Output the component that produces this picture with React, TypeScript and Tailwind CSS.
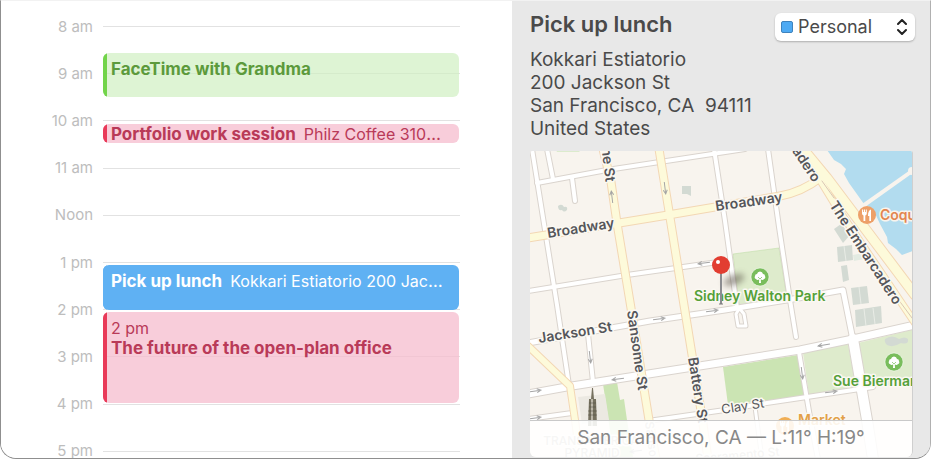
import React from "react";

const hours = ["8 am", "9 am", "10 am", "11 am", "Noon", "1 pm", "2 pm", "3 pm", "4 pm", "5 pm"];

type CalendarEvent = {
  title: string;
  time?: string;
  place?: string;
  box: string;
  bar: string;
};

const events: CalendarEvent[] = [
  {
    title: "FaceTime with Grandma",
    box: "top-[52px] h-11 bg-[#d0f0c2]/70 pt-1.5 text-[#5c9a3c]",
    bar: "bg-[#72d44a]",
  },
  {
    title: "Portfolio work session",
    place: "Philz Coffee 3101 24th St",
    box: "top-[123px] h-[19px] bg-[#f8cdda] text-[#b93a58]",
    bar: "bg-[#e93a59]",
  },
  {
    title: "Pick up lunch",
    place: "Kokkari Estiatorio 200 Jackson St",
    box: "top-[264px] h-[45px] bg-[#5fb1f3] pt-1.5 text-white",
    bar: "bg-[#5fb1f3]",
  },
  {
    title: "The future of the open-plan office",
    time: "2 pm",
    box: "top-[311px] h-[91px] bg-[#f5bccd]/75 pt-1.5 text-[#b93a58]",
    bar: "bg-[#e93a59]",
  },
];

function Timeline() {
  return (
    <section aria-label="Day" className="relative overflow-hidden bg-white">
      <ol className="grid h-[474px] auto-rows-fr pt-0.5">
        {hours.map((hour) => (
          <li key={hour} className="flex items-center gap-2.5 pr-[52px]">
            <span className="w-[92px] text-right text-[15px] leading-5 text-[#bdbdbd]">{hour}</span>
            <span className="h-px flex-1 bg-[#e2e2e2]" />
          </li>
        ))}
      </ol>
      {events.map((event) => (
        <button
          key={event.title}
          type="button"
          className={`absolute right-[53px] left-[102px] flex items-start overflow-hidden rounded-md pl-2 text-left text-[17px] leading-5 ${event.box}`}
        >
          <span className={`absolute inset-y-0 left-0 w-1 ${event.bar}`} />
          <span className="min-w-0 truncate pr-3.5">
            {event.time && <span className="block text-[16px]">{event.time}</span>}
            <span className="font-bold">{event.title}</span>
            {event.place && <span className="ml-2 text-[16px]">{event.place}</span>}
          </span>
        </button>
      ))}
    </section>
  );
}

const whiteRoads: [string, number][] = [
  ["M2 -2 L27 154 L39 234", 4],
  ["M7 32 L77 19 L215 -2", 4],
  ["M17 -2 L23 28", 4],
  ["M42 27 L45 50", 4],
  ["M-2 140 L97 124 L195 110", 4],
  ["M184 -2 L195 70 L207 157", 4],
  ["M238 -2 L249 76 L260 149 L266 186", 4],
  ["M-2 192 L120 170 L195 159 L263 148 L313 139 L323 189", 5],
  ["M209 158 L206 163 L208 175 H216 L214 163 L210 158", 3],
  ["M58 183 L63 231", 4],
  ["M-2 268 L42 262", 4],
  ["M118 270 L195 259 L230 253 L277 246 L343 236", 4],
  ["M269 201 L280 266 L288 308", 4],
  ["M225 256 L232 308", 3],
  ["M-2 243 L42 235 L195 211 L270 199 L323 188 L385 174", 7],
  ["M323 188 L337 269 L343 308", 10],
];

const yellowRoads: [string, number][] = [
  ["M-2 87 L138 64 L250 45 Q272 41 290 27", 7],
  ["M73 -2 L81 31 L87 72 L100 151 L119 269 L126 308", 7],
  ["M129 -2 L154 154 L172 266 L178 308", 7],
  ["M-2 195 L40 235 L45 269 L50 308", 6],
  ["M290 29 L304 52 L350 120 L385 172", 6],
  ["M273 -2 L297 27 L385 144", 9],
];

const arrows = [
  "translate(82 46) rotate(-97)",
  "translate(135 37) rotate(83)",
  "translate(174 112) rotate(172)",
  "translate(129 168) rotate(-8)",
  "translate(182 160) rotate(-8)",
  "translate(60 206) rotate(83)",
  "translate(88 228) rotate(172)",
  "translate(5 240) rotate(-8)",
  "translate(5 267) rotate(-8)",
  "translate(294 194) rotate(170)",
  "translate(272 222) rotate(83)",
  "translate(301 241) rotate(-8)",
  "translate(106 300) rotate(172)",
];

const streetLabels: [string, string, number][] = [
  ["Broadway", "translate(18 87) rotate(-9)", 14],
  ["Broadway", "translate(186 60) rotate(-8)", 14],
  ["Jackson St", "translate(9 192) rotate(-9)", 14],
  ["me St", "translate(71 -7) rotate(83)", 14],
  ["Sansome St", "translate(97 160) rotate(82)", 14],
  ["Battery St", "translate(158 207) rotate(81)", 14],
  ["The Embarcadero", "translate(299 54) rotate(57)", 14],
  ["cadero", "translate(257 -7) rotate(56)", 14],
  ["Clay St", "translate(192 263) rotate(-9)", 13],
];

function TreeBadge({ x, y }: { x: number; y: number }) {
  return (
    <g transform={`translate(${x} ${y})`}>
      <circle r="9" fill="#79bd5c" stroke="#fff" strokeWidth="0.5" />
      <path
        d="M-1 6 L-0.800 2.500 Q-3 3.500 -4 2 Q-6 1.500 -5 -1 Q-5 -3 -3 -3 Q-2.500 -5.500 0 -5.500 Q2.500 -5.500 3 -3 Q5 -3 5 -1 Q6 1.500 4 2 Q3 3.500 0.800 2.500 L1 6 Z"
        fill="#fff"
      />
      <path d="M-2 0 L0 2 L2 0" fill="none" stroke="#79bd5c" strokeWidth="0.700" />
    </g>
  );
}

function ForkBadge({ x, y, color }: { x: number; y: number; color: string }) {
  return (
    <g transform={`translate(${x} ${y})`}>
      <circle r="9" fill={color} />
      <path d="M-5 -5.500 H-4 V-3 H-3.200 V-5.500 H-2 V-3 H-1.200 V-5.500 H-0.200 V-1.500 Q-0.200 0 -1.700 0.500 V6 H-3.500 V0.500 Q-5 0 -5 -1.500 Z" fill="#fff" />
      <path d="M4 -5.500 V6 H2.300 V1 H1 Q0.800 -4.500 4 -5.500 Z" fill="#fff" />
    </g>
  );
}

function StreetMap() {
  return (
    <svg
      viewBox="0 0 383 306"
      preserveAspectRatio="xMinYMin slice"
      className="absolute inset-0 size-full"
      role="img"
      aria-label="Map of Sidney Walton Park and the surrounding streets"
    >
      <defs>
        <filter id="soft" x="-50%" y="-50%" width="200%" height="200%">
          <feGaussianBlur stdDeviation="3" />
        </filter>
      </defs>
      <rect width="383" height="306" fill="#f8f4ee" />
      <path
        d="M297 -1 L304 9 L311 13 L316 18 L314 23 L319 32 L334 53 L343 58 L350 73 L357 86 L358 92 L366 98 L372 104 L385 99 V-1 Z"
        fill="#b2dcef"
      />
      <path d="M330 57 L385 18" stroke="#f8f4ee" strokeWidth="4" />
      <circle cx="382" cy="20" r="4" fill="#f8f4ee" />
      <path d="M26 -1 h25 l-2 2 h-22 Z" fill="#dcebcd" />
      <path d="M203 103 L249 97 L257 147 L209 155 Z" fill="#deebcc" stroke="#b9dba0" strokeWidth="0.500" />
      <path d="M193 216 L268 204 L274 245 L198 254 Z" fill="#cbe4b3" />
      <path d="M273 202 L318 193 L326 236 L279 244 Z" fill="#deebcc" />
      <path d="M328 192 L385 178 V230 L335 238 Z" fill="#deebcc" />
      <path d="M73 233 L87 231 L90 249 L94 248 L97 269 L103 306 H84 Z" fill="#cbe4b3" />
      <path d="M48 246 L75 243 L79 269 L52 273 Z" fill="#ece9e2" />
      <g fill="#d3dad3">
        <path d="M28 55 q4 -3 6 1 q4 -1 3 3 q-3 3 -5 0 q-4 1 -4 -4 Z" />
        <path d="M152 35 h9 v10 l-4 -2 h-5 Z" />
        <path d="M304 78 L311 73 L320 84 L313 92 Z" />
        <path d="M307 96 L322 94 L323 109 L308 111 Z" />
        <path d="M311 115 L317 114 L319 129 L313 131 Z" />
        <path d="M321 137 L337 135 L339 152 L323 154 Z" />
        <path d="M325 159 L351 155 L352 172 L326 176 Z" />
        <path d="M355 188 q7 -5 14 0 q6 -3 9 0 q1 6 -7 4 q-8 5 -14 2 q-3 -3 -2 -6 Z" />
      </g>
      <path d="M323 104 L333 102 L334 108 L324 110 Z" fill="#e3ebe2" />
      <path d="M314 95 l2 15 M329 136 l2 17 M334 158 l2 17 M343 157 l2 16" stroke="#e9ece6" strokeWidth="1" />

      <g fill="none" strokeLinejoin="round" strokeLinecap="round">
        {whiteRoads.map(([d, width]) => (
          <path key={d} d={d} stroke="#dad4ce" strokeWidth={width + 2} />
        ))}
        {whiteRoads.map(([d, width]) => (
          <path key={d} d={d} stroke="#ffffff" strokeWidth={width} />
        ))}
        {yellowRoads.map(([d, width]) => (
          <path key={d} d={d} stroke="#f3d7b4" strokeWidth={width + 2} />
        ))}
        {yellowRoads.map(([d, width]) => (
          <path key={d} d={d} stroke="#fdfada" strokeWidth={width} />
        ))}
        <path d="M292 30 L304 47 M365 144 L385 171" stroke="#d9c6b4" strokeWidth="1" />
      </g>

      {arrows.map((transform) => (
        <path
          key={transform}
          d="M-6 0 H6 M2 -2 L6 0 L2 2"
          transform={transform}
          fill="none"
          stroke="#a5a5a5"
          strokeWidth="1"
        />
      ))}

      <path d="M62 237 H63 L64 248 H66 L67 275 H58 L59 248 H61 Z" fill="#76715f" />
      <path d="M62 248 V275" stroke="#bdb8aa" strokeWidth="2" />
      <path d="M59 252 H66 M59 256 H66 M58 260 H67 M58 264 H67" stroke="#4e4a3e" strokeWidth="0.500" />

      <g strokeWidth="3" strokeLinejoin="round" paintOrder="stroke" fontWeight="600">
        <g fill="#55565a" stroke="#fbf8f2">
          {streetLabels.map(([label, transform, size]) => (
            <text key={transform} transform={transform} fontSize={size} fontWeight={size === 13 ? 400 : 600}>
              {label}
            </text>
          ))}
        </g>
        <g fill="#55a039" stroke="#fbf8f2" fontSize="14">
          <text x="164" y="150">Sidney Walton Park</text>
          <text x="303" y="235">Sue Bierman Park</text>
        </g>
        <text x="350" y="69" fontSize="14" fill="#e28651" stroke="#f8f4ee">Coqueta</text>
        <text x="268" y="274" fontSize="14" fill="#e2a047" stroke="#fbf8f2">Market</text>
        <g fontSize="12" fill="#b4b0a8" stroke="#fbf8f2" fontWeight="500">
          <text x="61" y="294" textAnchor="middle">TRANSAMERICA</text>
          <text x="62" y="306" textAnchor="middle">PYRAMID</text>
          <text transform="translate(115 271) rotate(83)">Sanso</text>
          <text transform="translate(166 312) rotate(-5)">Sacramento St</text>
        </g>
      </g>

      <TreeBadge x={230} y={126} />
      <TreeBadge x={364} y={211} />
      <ForkBadge x={337} y={64} color="#eda069" />
      <ForkBadge x={255} y={275} color="#f0ae55" />

      <ellipse cx="204" cy="129" rx="11" ry="5" transform="rotate(-22 204 129)" fill="#5b5548" opacity="0.550" filter="url(#soft)" />
      <path d="M191 122 V153" stroke="#8c8c90" strokeWidth="2" />
      <path d="M189 153 H193" stroke="#77777a" strokeWidth="1" />
      <circle cx="191" cy="114" r="9" fill="#e23d31" />
      <circle cx="188" cy="111" r="2" fill="#fff" />
    </svg>
  );
}

function CalendarPicker() {
  return (
    <div className="relative">
      <label htmlFor="calendar" className="sr-only">
        Calendar
      </label>
      <select
        id="calendar"
        defaultValue="Personal"
        className="h-7 w-[140px] appearance-none rounded-md bg-white pr-7 pl-[23px] text-[18px] leading-6 text-[#4a4a4a] shadow-[0_1px_2px_rgba(0,0,0,0.25)]"
      >
        <option>Personal</option>
        <option>Work</option>
        <option>Family</option>
      </select>
      <span className="pointer-events-none absolute top-2 left-1.5 size-3 rounded-xs border border-[#3f83bd] bg-[#4eaaf3]" />
      <svg
        viewBox="0 0 10 16"
        className="pointer-events-none absolute top-1.5 right-2 h-4 w-2.5"
        fill="none"
        stroke="#222"
        strokeWidth="2"
        strokeLinecap="round"
        strokeLinejoin="round"
        aria-hidden="true"
      >
        <path d="M1 5 L5 1 L9 5 M1 11 L5 15 L9 11" />
      </svg>
    </div>
  );
}

function Details() {
  return (
    <aside className="flex min-w-0 flex-col bg-[#e8e8e8] pr-[15px] pl-[18px]">
      <header className="flex items-start justify-between pt-3">
        <h1 className="-mt-1 text-[22px] leading-[30px] font-semibold text-[#4a4a4a]">Pick up lunch</h1>
        <CalendarPicker />
      </header>
      <address className="mt-[7px] text-[19px] leading-[23px] whitespace-pre-line text-[#4a4a4a] not-italic">
        {"Kokkari Estiatorio\n200 Jackson St\nSan Francisco, CA\u00a0 94111\nUnited States"}
      </address>
      <div className="relative mt-[11px] mr-0.5 mb-px flex flex-1 items-end overflow-hidden rounded-t-xs rounded-b-md border-r border-[#cfcfcf]">
        <StreetMap />
        <p className="relative h-[37px] w-full border-t border-[#c9c9c9] bg-white/88 text-center text-[19px] leading-[33px] text-[#888888]">
          San Francisco, CA — L:11° H:19°
        </p>
      </div>
    </aside>
  );
}

export default function App() {
  return (
    <main className="h-screen bg-white pb-px font-['Inter','Liberation_Sans',sans-serif]">
      <div className="grid h-full grid-cols-[55fr_45fr] overflow-hidden rounded-b-2xl border border-t-[#f2f2f2] border-r-[#b0b0b0] border-b-[#8f8f8f] border-l-[#8f8f8f]">
        <Timeline />
        <Details />
      </div>
    </main>
  );
}
